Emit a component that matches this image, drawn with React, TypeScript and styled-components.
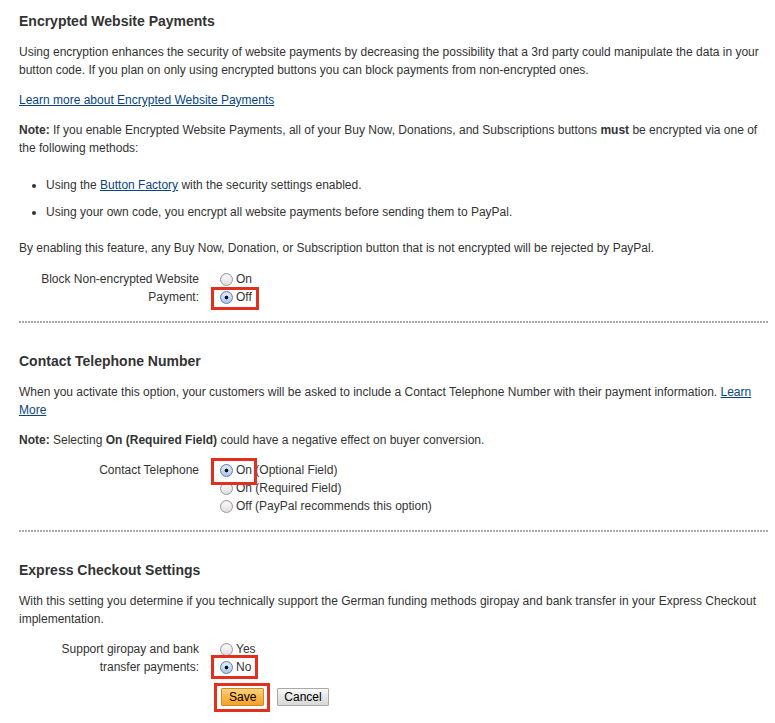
import React from "react";
import styled, { createGlobalStyle } from "styled-components";

const GlobalStyle = createGlobalStyle`
  html, body { margin: 0; padding: 0; background: #fff; }
  body {
    font-family: "Liberation Sans", Arial, Helvetica, sans-serif;
    font-size: 12px;
    color: #333;
  }
`;

const Page = styled.div`
  padding: 12px 7px 17px 19px;
  width: 749px;
`;

const Section = styled.section``;

const Heading = styled.h2`
  margin: 0 0 13px;
  font-size: 14px;
  line-height: 18px;
  font-weight: bold;
  color: #333;
`;

const Para = styled.p`
  margin: 0 0 12px;
  line-height: 18px;
`;

const Link = styled.a`
  color: #084482;
  text-decoration: underline;
  cursor: pointer;
`;

const BulletList = styled.ul`
  margin: 19px 0 18px;
  padding-left: 27px;
  line-height: 18px;
  li + li { margin-top: 9px; }
`;

const Divider = styled.div`
  height: 2px;
  margin: 15px 0 29px;
  background-image: linear-gradient(to right, #ababab 2px, transparent 2px);
  background-size: 3px 2px;
  background-repeat: repeat-x;
`;

const FormRow = styled.div<{ $top?: number }>`
  display: grid;
  grid-template-columns: 180px 1fr;
  column-gap: 21px;
  margin-top: ${(p) => p.$top ?? 12}px;
  line-height: 18px;
`;

const Label = styled.div`
  text-align: right;
`;

const Options = styled.div`
  display: flex;
  flex-direction: column;
`;

const Option = styled.label`
  display: flex;
  align-items: center;
  height: 18px;
  white-space: nowrap;
`;

const Highlight = styled.span<{ $t: number; $r: number; $b: number; $l: number }>`
  position: relative;
  display: inline-flex;
  align-items: center;
  &::after {
    content: "";
    position: absolute;
    top: ${(p) => p.$t}px;
    right: ${(p) => p.$r}px;
    bottom: ${(p) => p.$b}px;
    left: ${(p) => p.$l}px;
    border: 3px solid #e2301f;
    pointer-events: none;
  }
`;

const Radio = styled.input.attrs({ type: "radio" })`
  appearance: none;
  -webkit-appearance: none;
  box-sizing: border-box;
  width: 13px;
  height: 13px;
  margin: 0 3px 0 0;
  border-radius: 50%;
  border: 1px solid #9a9a9a;
  background: linear-gradient(#fdfdfd, #dedede);
  box-shadow: inset 0 1px 1px rgba(0, 0, 0, 0.08);
  &:checked {
    border-color: #5f7fae;
    background:
      radial-gradient(circle at 50% 50%, #111 0, #111 1.6px, transparent 2.2px),
      linear-gradient(#e6f0fb, #a9c6ea);
  }
`;

const Buttons = styled.div`
  display: flex;
  gap: 13px;
  padding-left: 1px;
`;

const Button = styled.button<{ $primary?: boolean }>`
  box-sizing: border-box;
  height: 18px;
  padding: 0 ${(p) => (p.$primary ? 7 : 6)}px;
  font-family: "Liberation Sans", Arial, Helvetica, sans-serif;
  font-size: 12px;
  line-height: 16px;
  color: #000;
  border-radius: 1px;
  cursor: pointer;
  border: 1px solid ${(p) => (p.$primary ? "#cf8a25" : "#a8a8a8")};
  background: ${(p) =>
    p.$primary
      ? "linear-gradient(#fed37e, #f9b446 55%, #f5a12a)"
      : "linear-gradient(#fbfbfb, #e4e4e4 55%, #d9d9d9)"};
`;

export default function App() {
  return (
    <>
      <GlobalStyle />
      <Page>
        <Section>
          <Heading>Encrypted Website Payments</Heading>
          <Para>
            Using encryption enhances the security of website payments by decreasing the possibility that a 3rd
            party could manipulate the data in your button code. If you plan on only using encrypted buttons you can
            block payments from non-encrypted ones.
          </Para>
          <Para>
            <Link>Learn more about Encrypted Website Payments</Link>
          </Para>
          <Para>
            <b>Note:</b> If you enable Encrypted Website Payments, all of your Buy Now, Donations, and Subscriptions
            buttons <b>must</b> be encrypted via one of the following methods:
          </Para>
          <BulletList>
            <li>
              Using the <Link>Button Factory</Link> with the security settings enabled.
            </li>
            <li>Using your own code, you encrypt all website payments before sending them to PayPal.</li>
          </BulletList>
          <Para>
            By enabling this feature, any Buy Now, Donation, or Subscription button that is not encrypted will be
            rejected by PayPal.
          </Para>
          <FormRow $top={13}>
            <Label>Block Non-encrypted Website Payment:</Label>
            <Options>
              <Option>
                <Radio name="block" readOnly />
                On
              </Option>
              <Option>
                <Highlight $t={-1} $r={-7} $b={-4} $l={-9}>
                  <Radio name="block" defaultChecked />
                  Off
                </Highlight>
              </Option>
            </Options>
          </FormRow>
        </Section>
        <Divider />
        <Section>
          <Heading>Contact Telephone Number</Heading>
          <Para>
            When you activate this option, your customers will be asked to include a Contact Telephone Number with
            their payment information. <Link>Learn More</Link>
          </Para>
          <Para>
            <b>Note:</b> Selecting <b>On (Required Field)</b> could have a negative effect on buyer conversion.
          </Para>
          <FormRow>
            <Label>Contact Telephone</Label>
            <Options>
              <Option>
                <Highlight $t={-3} $r={-5} $b={-6} $l={-9}>
                  <Radio name="phone" defaultChecked />
                  On
                </Highlight>
                &nbsp;(Optional Field)
              </Option>
              <Option>
                <Radio name="phone" />
                On (Required Field)
              </Option>
              <Option>
                <Radio name="phone" />
                Off (PayPal recommends this option)
              </Option>
            </Options>
          </FormRow>
        </Section>
        <Divider />
        <Section>
          <Heading>Express Checkout Settings</Heading>
          <Para>
            With this setting you determine if you technically support the German funding methods giropay and bank
            transfer in your Express Checkout implementation.
          </Para>
          <FormRow>
            <Label>Support giropay and bank transfer payments:</Label>
            <Options>
              <Option>
                <Radio name="giro" />
                Yes
              </Option>
              <Option>
                <Highlight $t={-3} $r={-7} $b={-3} $l={-9}>
                  <Radio name="giro" defaultChecked />
                  No
                </Highlight>
              </Option>
            </Options>
          </FormRow>
          <FormRow $top={12}>
            <Label />
            <Buttons>
              <Highlight $t={-5} $r={-6} $b={-6} $l={-7}>
                <Button $primary>Save</Button>
              </Highlight>
              <Button>Cancel</Button>
            </Buttons>
          </FormRow>
        </Section>
      </Page>
    </>
  );
}
